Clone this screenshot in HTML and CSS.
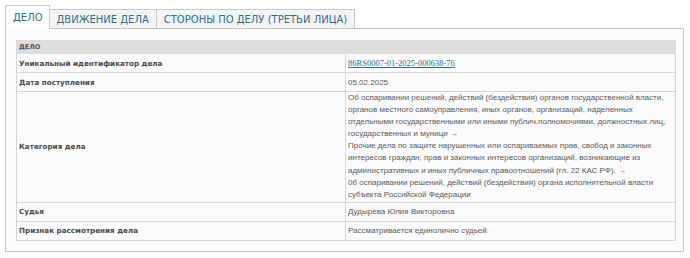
FILE: index.html
```html
<!DOCTYPE html>
<html lang="ru">
<head>
<meta charset="utf-8">
<link rel="stylesheet" href="styles.css">
</head>
<body>
<div class="tabs">
  <div class="tab active">ДЕЛО</div>
  <div class="tab">ДВИЖЕНИЕ ДЕЛА</div>
  <div class="tab">СТОРОНЫ ПО ДЕЛУ (ТРЕТЬИ ЛИЦА)</div>
</div>
<div class="panel">
  <table class="info">
    <tr><th colspan="2" class="head">ДЕЛО</th></tr>
    <tr><td class="label">Уникальный идентификатор дела</td><td class="value"><a class="uid" href="#">86RS0007-01-2025-000638-76</a></td></tr>
    <tr><td class="label">Дата поступления</td><td class="value">05.02.2025</td></tr>
    <tr><td class="label">Категория дела</td><td class="value multi">Об оспаривании решений, действий (бездействия) органов государственной власти, органов местного самоуправления, иных органов, организаций, наделенных отдельными государственными или иными публич.полномочиями, должностных лиц, государственных и муници →<br>Прочие дела по защите нарушенных или оспариваемых прав, свобод и законных интересов граждан, прав и законных интересов организаций, возникающие из административных и иных публичных правоотношений (гл. 22 КАС РФ). →<br>0б оспаривании решений, действий (бездействия) органа исполнительной власти субъекта Российской Федерации</td></tr>
    <tr><td class="label">Судья</td><td class="value">Дудырева Юлия Викторовна</td></tr>
    <tr><td class="label">Признак рассмотрения дела</td><td class="value">Рассматривается единолично судьей</td></tr>
  </table>
</div>
</body>
</html>
```
FILE: styles.css
```css
html, body {
  margin: 0;
  padding: 0;
  background: #ffffff;
}
body {
  font-family: "DejaVu Sans", Verdana, sans-serif;
}
.tabs {
  display: flex;
  align-items: flex-end;
  padding: 5px 0 0 5px;
  height: 23px;
}
.tab {
  box-sizing: border-box;
  height: 19px;
  padding: 0 7px;
  border: 1px solid #c9c9c9;
  border-bottom: none;
  border-left: none;
  background: #f4f4f6;
  color: #2d6e8e;
  font-size: 10px;
  line-height: 19px;
  white-space: nowrap;
}
.tab.active {
  height: 24px;
  line-height: 23px;
  border-left: 1px solid #c9c9c9;
  background: #ffffff;
  padding: 0 6px 0 7px;
  position: relative;
  top: 1px;
  z-index: 1;
}
.panel {
  box-sizing: border-box;
  margin-left: 5px;
  width: 679px;
  height: 224px;
  border: 1px solid #c3c3c3;
  background: #fcfcfd;
  padding: 11px 7px 0 10px;
}
.info {
  width: 660px;
  border-collapse: collapse;
  background: #fbfafc;
}
.info th.head {
  background: #dcdcdc;
  text-align: left;
  font-size: 6.5px;
  font-weight: bold;
  color: #555;
  height: 12px;
  padding: 0 2px;
  line-height: 12px;
  border: 1px solid #dcdcdc;
}
.info td {
  border: 1px solid #d6d6d8;
  height: 18px;
  padding: 0 2px;
  vertical-align: middle;
}
.label {
  width: 324px;
  font-size: 7.2px;
  font-weight: bold;
  color: #4a4a4a;
}
.value {
  font-family: "Liberation Sans", Arial, sans-serif;
  font-size: 8px;
  color: #5a5a5a;
}
.value.multi {
  line-height: 12.1px;
  padding: 0 2px 1px 2px;
}
.uid {
  font-family: "Liberation Serif", "Times New Roman", serif;
  font-size: 8.5px;
  color: #2e6d8a;
}
```
